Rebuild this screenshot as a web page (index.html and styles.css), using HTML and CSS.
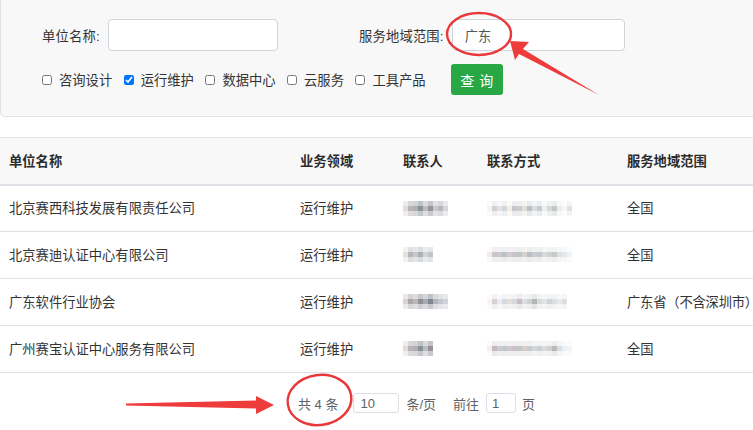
FILE: index.html
```html
<!DOCTYPE html>
<html lang="zh-CN">
<head>
<meta charset="utf-8">
<title>查询</title>
<link rel="stylesheet" href="styles.css">
</head>
<body>
<div class="page">
  <div class="search-panel">
    <div class="form-row">
      <div class="form-group first">
        <label class="form-label">单位名称:</label>
        <input class="form-input" type="text" value="">
      </div>
      <div class="form-group">
        <label class="form-label">服务地域范围:</label>
        <input class="form-input second" type="text" value="广东">
      </div>
    </div>
    <div class="form-row checks">
      <label class="check"><input type="checkbox"><span>咨询设计</span></label>
      <label class="check"><input type="checkbox" checked><span>运行维护</span></label>
      <label class="check"><input type="checkbox"><span>数据中心</span></label>
      <label class="check"><input type="checkbox"><span>云服务</span></label>
      <label class="check"><input type="checkbox"><span>工具产品</span></label>
      <button class="btn-query" type="button">查询</button>
    </div>
  </div>

  <table class="result-table">
    <colgroup>
      <col class="c1"><col class="c2"><col class="c3"><col class="c4"><col class="c5">
    </colgroup>
    <thead>
      <tr><th>单位名称</th><th>业务领域</th><th>联系人</th><th>联系方式</th><th>服务地域范围</th></tr>
    </thead>
    <tbody>
      <tr>
        <td>北京赛西科技发展有限责任公司</td><td>运行维护</td>
        <td><span class="mosaic dark w45"></span></td>
        <td><span class="mosaic light w85"></span></td>
        <td>全国</td>
      </tr>
      <tr>
        <td>北京赛迪认证中心有限公司</td><td>运行维护</td>
        <td><span class="mosaic dark w30 alt"></span></td>
        <td><span class="mosaic light w85 alt"></span></td>
        <td>全国</td>
      </tr>
      <tr>
        <td>广东软件行业协会</td><td>运行维护</td>
        <td><span class="mosaic dark w45 alt2"></span></td>
        <td><span class="mosaic light w80 alt2"></span></td>
        <td class="wide">广东省（不含深圳市）</td>
      </tr>
      <tr>
        <td>广州赛宝认证中心服务有限公司</td><td>运行维护</td>
        <td><span class="mosaic dark w30"></span></td>
        <td><span class="mosaic light w85 alt3"></span></td>
        <td>全国</td>
      </tr>
    </tbody>
  </table>

  <div class="pager">
    <span class="total">共 4 条</span>
    <input class="pager-input size" type="text" value="10">
    <span class="pager-text">条/页</span>
    <span class="pager-text goto">前往</span>
    <input class="pager-input page-no" type="text" value="1">
    <span class="pager-text">页</span>
  </div>

  <svg class="annotations" width="753" height="430" viewBox="0 0 753 430" xmlns="http://www.w3.org/2000/svg">
    <ellipse cx="479" cy="34" rx="32" ry="21" fill="none" stroke="#e8383a" stroke-width="2.4"/>
    <polygon points="510,41 529,42 523,49 599,95 519,54 515,60" fill="#ee3b3b"/>
    <ellipse cx="319.5" cy="400" rx="32" ry="25" fill="none" stroke="#e8383a" stroke-width="2.4" transform="rotate(-8 319.5 400)"/>
    <polygon points="126,403.5 256,400.5 256,396 274,405 256,414 256,408.5 126,405.5" fill="#ee3b3b"/>
  </svg>
</div>
</body>
</html>
```

FILE: styles.css
```css
html, body {
  margin: 0;
  padding: 0;
  background: #ffffff;
}
body {
  width: 753px;
  height: 430px;
  overflow: hidden;
  font-family: "Liberation Sans", "Noto Sans CJK SC", sans-serif;
  font-size: 13.3px;
  color: #333333;
}
.page {
  position: relative;
  width: 753px;
  height: 430px;
}

/* search panel */
.search-panel {
  box-sizing: border-box;
  width: 760px;
  height: 117px;
  background: #f8f8f8;
  border: 1px solid #e2e2e2;
  border-top: none;
  border-right: none;
  border-radius: 0 0 0 5px;
  padding: 19px 0 0 41px;
}
.form-row {
  display: flex;
  align-items: center;
}
.form-group {
  display: flex;
  align-items: center;
}
.form-group.first {
  margin-right: 81px;
}
.form-label {
  color: #333333;
  margin-right: 8px;
  letter-spacing: 0.2px;
}
.form-input {
  box-sizing: border-box;
  width: 170px;
  height: 32px;
  border: 1px solid #ced4da;
  border-radius: 4px;
  background: #ffffff;
  padding: 0 12px;
  font-family: "Liberation Sans", "Noto Sans CJK SC", sans-serif;
  font-size: 13.3px;
  color: #555555;
  outline: none;
}
.form-input.second {
  width: 173px;
}
.checks {
  margin-top: 13px;
  height: 31px;
}
.check {
  display: flex;
  align-items: center;
  margin-right: 11.5px;
  color: #333333;
}
.check input {
  width: 10px;
  height: 10px;
  margin: 0 7px 0 0;
}
.btn-query {
  box-sizing: border-box;
  width: 52px;
  height: 31px;
  margin-left: 14px;
  padding: 0 0 0 4px;
  border: none;
  border-radius: 3px;
  background: #28a745;
  color: #ffffff;
  font-family: "Liberation Sans", "Noto Sans CJK SC", sans-serif;
  font-size: 14px;
  letter-spacing: 5px;
}

/* table */
.result-table {
  margin-top: 20px;
  width: 790px;
  border-collapse: collapse;
  table-layout: fixed;
}
.c1 { width: 291px; }
.c2 { width: 103px; }
.c3 { width: 84px; }
.c4 { width: 140px; }
.c5 { width: 172px; }
.result-table th,
.result-table td {
  box-sizing: border-box;
  height: 47px;
  padding: 0 9px 1px;
  text-align: left;
  vertical-align: middle;
  white-space: nowrap;
  border-bottom: 1px solid #dee2e6;
  color: #333333;
}
.result-table th {
  background: #f8f8f8;
  border-top: 1px solid #dee2e6;
  border-bottom: 2px solid #dee2e6;
  font-weight: bold;
  color: #2b2b2b;
}
.result-table td.wide {
  letter-spacing: -0.2px;
}

/* pixelated placeholders */
.mosaic {
  display: inline-block;
  height: 15px;
  vertical-align: middle;
}
.w30 { width: 30px; }
.w45 { width: 45px; }
.w80 { width: 80px; }
.w85 { width: 85px; }
.mosaic.dark {
  background:
    linear-gradient(to bottom, rgba(255,255,255,0.45) 0 5px, rgba(255,255,255,0) 5px 10px, rgba(255,255,255,0.5) 10px 15px),
    repeating-linear-gradient(90deg, #e3dcd6 0 5px, #b8b5b8 5px 10px, #aeb0b4 10px 15px, #8d9298 15px 20px, #b9bdc4 20px 25px, #979399 25px 30px, #c9c8cf 30px 35px, #b4b9c1 35px 40px, #d8d6da 40px 45px);
}
.mosaic.dark.alt {
  background:
    linear-gradient(to bottom, rgba(255,255,255,0.6) 0 5px, rgba(255,255,255,0.05) 5px 10px, rgba(255,255,255,0.55) 10px 15px),
    repeating-linear-gradient(90deg, #e6ddd7 0 5px, #b2b1b6 5px 10px, #c2c4c8 10px 15px, #a8abb2 15px 20px, #cfd2d6 20px 25px, #bfc1c5 25px 30px);
}
.mosaic.dark.alt2 {
  background:
    linear-gradient(to bottom, rgba(255,255,255,0.5) 0 5px, rgba(255,255,255,0) 5px 10px, rgba(255,255,255,0.55) 10px 15px),
    repeating-linear-gradient(90deg, #d8d2d0 0 5px, #aaa7ab 5px 10px, #b9b8bd 10px 15px, #8e9297 15px 20px, #a8acb3 20px 25px, #7f8690 25px 30px, #b7b4bb 30px 35px, #c3c7cf 35px 40px, #cfd4da 40px 45px);
}
.mosaic.light {
  background:
    linear-gradient(to bottom, rgba(255,255,255,0.7) 0 5px, rgba(255,255,255,0.05) 5px 10px, rgba(255,255,255,0.65) 10px 15px),
    repeating-linear-gradient(90deg, #f4f1ee 0 5px, #d4ccd3 5px 10px, #dfe2e4 10px 15px, #cfd5d8 15px 20px, #f2ede3 20px 25px, #c6c2ca 25px 30px, #c4cad0 30px 35px, #dedcd8 35px 40px, #b7bdc4 40px 45px, #d9dadd 45px 50px, #c5c8cf 50px 55px, #eeeeee 55px 60px, #d2d6da 60px 65px, #bfc4c4 65px 70px, #e8ecef 70px 75px, #f5f6f8 75px 80px, #dcdfe2 80px 85px);
}
.mosaic.light.alt {
  background:
    linear-gradient(to bottom, rgba(255,255,255,0.75) 0 5px, rgba(255,255,255,0.05) 5px 10px, rgba(255,255,255,0.7) 10px 15px),
    repeating-linear-gradient(90deg, #efeaea 0 5px, #c9c1c8 5px 10px, #c3c8cc 10px 15px, #b9bec2 15px 20px, #cfc9c8 20px 25px, #c8c0c6 25px 30px, #bcc1c7 30px 35px, #d3d1ce 35px 40px, #b6bcc2 40px 45px, #c9cacd 45px 50px, #c1c4cb 50px 55px, #d9d9d9 55px 60px, #cbcfd3 60px 65px, #c4c8c7 65px 70px, #d9dee2 70px 75px, #e4e6ea 75px 80px, #eef2f6 80px 85px);
}
.mosaic.light.alt2 {
  background:
    linear-gradient(to bottom, rgba(255,255,255,0.7) 0 5px, rgba(255,255,255,0.05) 5px 10px, rgba(255,255,255,0.65) 10px 15px),
    repeating-linear-gradient(90deg, #f6f3f1 0 5px, #d6cfd5 5px 10px, #e8ebee 10px 15px, #d2d8dc 15px 20px, #e2ddd9 20px 25px, #d7d7d9 25px 30px, #c8b8c3 30px 35px, #d8dcdf 35px 40px, #cbd0cf 40px 45px, #aeb2b2 45px 50px, #d7d9dc 50px 55px, #e2e2e4 55px 60px, #cfd3d9 60px 65px, #d9dce0 65px 70px, #e6e8ea 70px 75px, #dcdde0 75px 80px);
}
.mosaic.light.alt3 {
  background:
    linear-gradient(to bottom, rgba(255,255,255,0.75) 0 5px, rgba(255,255,255,0.05) 5px 10px, rgba(255,255,255,0.7) 10px 15px),
    repeating-linear-gradient(90deg, #f3eeee 0 5px, #c0b7b9 5px 10px, #c4c9cd 10px 15px, #c0c3c7 15px 20px, #cdc6c9 20px 25px, #c8bfc6 25px 30px, #bcc3c9 30px 35px, #cfccc9 35px 40px, #c4c7cb 40px 45px, #d1d4d8 45px 50px, #c7cbd1 50px 55px, #d8d9da 55px 60px, #ccd1d5 60px 65px, #bdb4b3 65px 70px, #d4dde6 70px 75px, #e8eef4 75px 80px, #eef4fa 80px 85px);
}

/* pagination */
.pager {
  display: flex;
  align-items: center;
  height: 20px;
  margin-top: 20px;
  padding-left: 298px;
  color: #606266;
  font-size: 13px;
}
.total {
  margin-right: 15px;
}
.pager-input {
  box-sizing: border-box;
  height: 20px;
  border: 1px solid #dcdfe6;
  border-radius: 3px;
  background: #ffffff;
  font-family: "Liberation Sans", "Noto Sans CJK SC", sans-serif;
  font-size: 13px;
  color: #606266;
  outline: none;
}
.pager-input.size {
  width: 46px;
  padding: 0 0 0 6px;
  margin-right: 7px;
}
.pager-input.page-no {
  width: 30px;
  padding: 0 0 0 5px;
  margin: 0 6px 0 7px;
}
.goto {
  margin-left: 17px;
}

/* annotation overlay */
.annotations {
  position: absolute;
  left: 0;
  top: 0;
  pointer-events: none;
}
```
